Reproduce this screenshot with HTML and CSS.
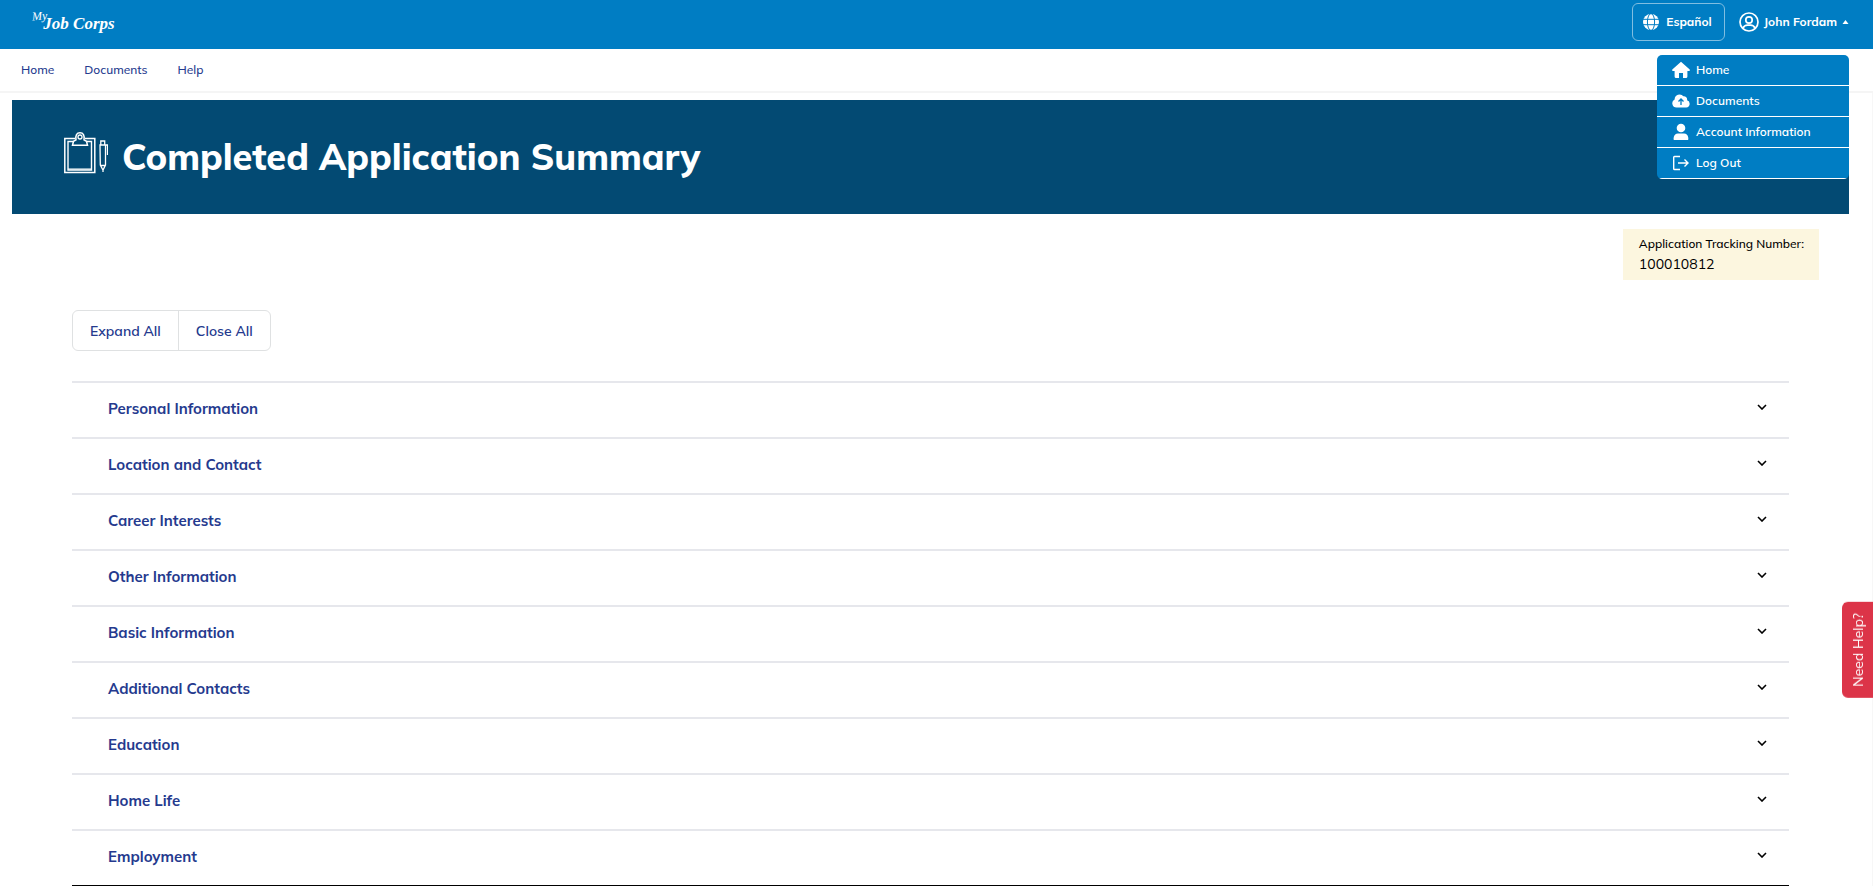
FILE: index.html
```html
<!DOCTYPE html>
<html lang="en">
<head>
<meta charset="UTF-8">
<meta name="viewport" content="width=device-width, initial-scale=1.0">
<title>Completed Application Summary</title>
<link rel="stylesheet" href="styles.css">
</head>
<body>

<header class="topbar">
  <a class="logo" href="#"><span class="logo-my">My</span><span class="logo-name">Job Corps</span></a>
  <div class="topbar-right">
    <button class="lang-btn" type="button">
      <svg class="icon-globe" viewBox="0 0 16 16" fill="none" stroke="#007dc3">
        <circle cx="8" cy="8" r="8" fill="#fff" stroke="none"/>
        <ellipse cx="8" cy="8" rx="3.6" ry="8.4"/>
        <path d="M0 5.3h16M0 10.7h16"/>
      </svg>
      <span class="label">Español</span>
    </button>
    <div class="user">
      <button class="user-btn" type="button" aria-expanded="true">
        <svg class="icon-user" viewBox="0 0 20 20" fill="none" stroke="#fff" stroke-width="1.7">
          <circle cx="10" cy="10" r="9"/>
          <circle cx="10" cy="8" r="3.2"/>
          <path d="M4 16.2c1-2.4 2.800-3 4.500-3h3c1.700 0 3.500.6 4.500 3"/>
        </svg>
        <span class="label">John Fordam</span>
        <svg class="icon-up" viewBox="0 0 6 4" fill="#fff"><path d="M0 4l3-4 3 4z"/></svg>
      </button>
      <nav class="user-menu">
        <a href="#">
          <svg viewBox="0 0 18 18" fill="#fff"><path d="M9 .8L.3 8.500q-.5 1.600 1 1.600h1.300V15.500q0 1.500 1.500 1.500H7v-5h4v5h2.900q1.500 0 1.500-1.500v-5.400h1.300q1.500 0 1-1.600z"/></svg>
          <span class="label">Home</span>
        </a>
        <a href="#">
          <svg viewBox="0 0 18 18" fill="#fff"><path d="M4.500 15.500A4.300 4.300 0 0 1 2.600 7.400 5 5 0 0 1 11.400 4.300a3.400 3.400 0 0 1 3.700 4A3.700 3.700 0 0 1 14.300 15.500z"/><path d="M9 13V7.500M6.500 9.500L9 7l2.500 2.500" fill="none" stroke="#007dc3" stroke-width="1.300"/></svg>
          <span class="label">Documents</span>
        </a>
        <a href="#">
          <svg viewBox="0 0 18 18" fill="#fff"><circle cx="9" cy="5" r="4.300"/><path d="M2 17c-.8 0-.8-7 4.500-6.500h5c5.300-.5 5.300 6.500 4.500 6.500z"/></svg>
          <span class="label">Account Information</span>
        </a>
        <a href="#">
          <svg viewBox="0 0 18 18" fill="none" stroke="#fff" stroke-width="1.400"><path d="M8 2.500H2.500q-.8 0-.8.8v11.400q0 .8.800.8H8M6 9h10M12.500 5.500L16 9l-3.500 3.500"/></svg>
          <span class="label">Log Out</span>
        </a>
      </nav>
    </div>
  </div>
</header>

<nav class="mainnav">
  <a href="#">Home</a>
  <a href="#">Documents</a>
  <a href="#">Help</a>
</nav>

<main class="page">
  <div class="banner">
    <svg class="icon-clipboard" viewBox="0 0 44 42" fill="none" stroke="#fff">
      <path d="M11 6.500H.8v34h30v-34H21" stroke-width="1.500"/>
      <path d="M9 9.500H4v28.500h23.500V9.500H23" stroke-width="1.400"/>
      <path d="M4 37h23" stroke-width="1.500" stroke-opacity=".7"/>
      <path d="M8.500 13.300l1-4 2.500-1.500q-1-7 4-7t4 7l2.500 1.500 1 4z" stroke-width="1.500"/>
      <circle cx="16" cy="5" r="2" stroke-width="1.300"/>
      <path d="M36.800 12.500V9h3.900v3.500M36 13h5.500v20L39 38l-2.700-5zM41 13h2.500v10M39 38v2M36.500 33.500h4.500" stroke-width="1.300"/>
    </svg>
    <h1>Completed Application Summary</h1>
  </div>

  <div class="tracking">
    <div class="tracking-label">Application Tracking Number:</div>
    <div class="tracking-number">100010812</div>
  </div>

  <div class="content">
    <div class="btn-group">
      <button type="button">Expand All</button>
      <button type="button">Close All</button>
    </div>

    <div class="accordion">
      <button class="accordion-row" type="button" aria-expanded="false">Personal Information <svg class="chevron" viewBox="0 0 10 6"><path d="M1 1l4 4 4-4"/></svg></button>
      <button class="accordion-row" type="button" aria-expanded="false">Location and Contact <svg class="chevron" viewBox="0 0 10 6"><path d="M1 1l4 4 4-4"/></svg></button>
      <button class="accordion-row" type="button" aria-expanded="false">Career Interests <svg class="chevron" viewBox="0 0 10 6"><path d="M1 1l4 4 4-4"/></svg></button>
      <button class="accordion-row" type="button" aria-expanded="false">Other Information <svg class="chevron" viewBox="0 0 10 6"><path d="M1 1l4 4 4-4"/></svg></button>
      <button class="accordion-row" type="button" aria-expanded="false">Basic Information <svg class="chevron" viewBox="0 0 10 6"><path d="M1 1l4 4 4-4"/></svg></button>
      <button class="accordion-row" type="button" aria-expanded="false">Additional Contacts <svg class="chevron" viewBox="0 0 10 6"><path d="M1 1l4 4 4-4"/></svg></button>
      <button class="accordion-row" type="button" aria-expanded="false">Education <svg class="chevron" viewBox="0 0 10 6"><path d="M1 1l4 4 4-4"/></svg></button>
      <button class="accordion-row" type="button" aria-expanded="false">Home Life <svg class="chevron" viewBox="0 0 10 6"><path d="M1 1l4 4 4-4"/></svg></button>
      <button class="accordion-row" type="button" aria-expanded="false">Employment <svg class="chevron" viewBox="0 0 10 6"><path d="M1 1l4 4 4-4"/></svg></button>
    </div>
  </div>
</main>

<button class="help-tab" type="button">Need Help?</button>

</body>
</html>
```

FILE: styles.css
```css
* {
  box-sizing: border-box;
}

body {
  margin: 0;
  background: #fff;
  color: #000;
  font-family: Mulish, "Open Sans", "Noto Sans", sans-serif;
  font-size: 14px;
}

a {
  text-decoration: none;
}

button {
  margin: 0;
  font-family: inherit;
  background: none;
  border: 0;
  cursor: pointer;
}

/* top bar */
.topbar {
  display: flex;
  justify-content: space-between;
  align-items: flex-start;
  padding: 3px 24px 8px 32px;
  background: #007dc3;
  color: #fff;
}

.logo {
  display: flex;
  align-items: flex-start;
  padding-top: 6px;
  color: #fff;
  font-family: "Liberation Serif", serif;
  font-style: italic;
}

.logo-my {
  margin-right: -4px;
  font-size: 12px;
  line-height: 14px;
  transform: rotate(-4deg);
}

.logo-name {
  padding-top: 5px;
  font-size: 17px;
  line-height: 20px;
  font-weight: bold;
}

.topbar-right {
  display: flex;
  align-items: center;
  gap: 14px;
}

.label {
  padding-bottom: 2px;
}

.lang-btn {
  display: flex;
  align-items: center;
  gap: 7px;
  height: 38px;
  padding: 0 12px 0 10px;
  border: 1px solid #80bee1;
  border-radius: 6px;
  color: #fff;
  font-size: 12px;
  font-weight: 700;
}

.icon-globe {
  width: 16px;
  height: 16px;
}

.user {
  position: relative;
}

.user-btn {
  display: flex;
  align-items: center;
  gap: 5px;
  padding: 0;
  color: #fff;
  font-size: 12px;
  font-weight: 700;
}

.icon-user {
  width: 20px;
  height: 20px;
}

.icon-up {
  width: 7px;
  height: 4px;
}

.user-menu {
  position: absolute;
  top: 43px;
  right: 0;
  z-index: 2;
  width: 192px;
  background: #007dc3;
  border-radius: 5px;
  overflow: hidden;
}

.user-menu a {
  display: flex;
  align-items: center;
  gap: 6px;
  height: 31px;
  padding: 0 15px;
  border-bottom: 1px solid #fff;
  color: #fff;
  font-size: 12px;
  font-weight: 600;
}

.user-menu svg {
  width: 18px;
  height: 18px;
}

/* main nav */
.mainnav {
  display: flex;
  gap: 30px;
  padding: 12px 21px;
  border-bottom: 2px solid #f5f5f5;
  font-size: 12px;
  line-height: 18px;
  font-weight: 500;
}

.mainnav a {
  color: #253a8e;
}

/* page */
.page {
  padding: 7px 23px 0 12px;
  border-right: 1px solid #f7f7f7;
}

.banner {
  display: flex;
  align-items: flex-start;
  gap: 14px;
  height: 114px;
  padding: 32px 52px 0;
  background: #034a73;
  color: #fff;
}

.banner h1 {
  margin: 0;
  font-size: 36px;
  line-height: 50px;
  font-weight: 800;
}

.icon-clipboard {
  width: 44px;
  height: 42px;
}

.tracking {
  width: max-content;
  margin: 15px 30px 0 auto;
  padding: 5px 15px 6px 16px;
  background: #fcf6df;
  line-height: 20px;
}

.tracking-label {
  font-size: 12px;
  font-weight: 500;
}

.tracking-number {
  font-size: 14px;
}

.content {
  padding: 30px 60px 0;
}

.btn-group {
  display: inline-flex;
  height: 41px;
  margin-bottom: 30px;
  border: 1px solid #dfe1e2;
  border-radius: 6px;
}

.btn-group button {
  padding: 0 17px;
  color: #253a8e;
  font-size: 14px;
  font-weight: 600;
}

.btn-group button + button {
  border-left: 1px solid #dfe1e2;
}

.accordion {
  border-bottom: 1px solid #000;
}

.accordion-row {
  display: flex;
  justify-content: space-between;
  align-items: center;
  width: 100%;
  height: 56px;
  padding: 0 22px 4px 36px;
  border-top: 2px solid #e6e7ec;
  color: #253a8e;
  font-size: 15px;
  font-weight: 700;
}

.chevron {
  width: 10px;
  height: 6px;
  margin-bottom: 2px;
  fill: none;
  stroke: #000;
  stroke-width: 1.6;
}

/* help tab stuck to the right edge */
.help-tab {
  position: fixed;
  top: 602px;
  right: 0;
  padding: 11px 6px 11px 5px;
  background: #dc3448;
  border-radius: 0 6px 6px 0;
  color: #fff;
  font-size: 14px;
  line-height: 20px;
  writing-mode: vertical-rl;
  transform: rotate(180deg);
}
```
